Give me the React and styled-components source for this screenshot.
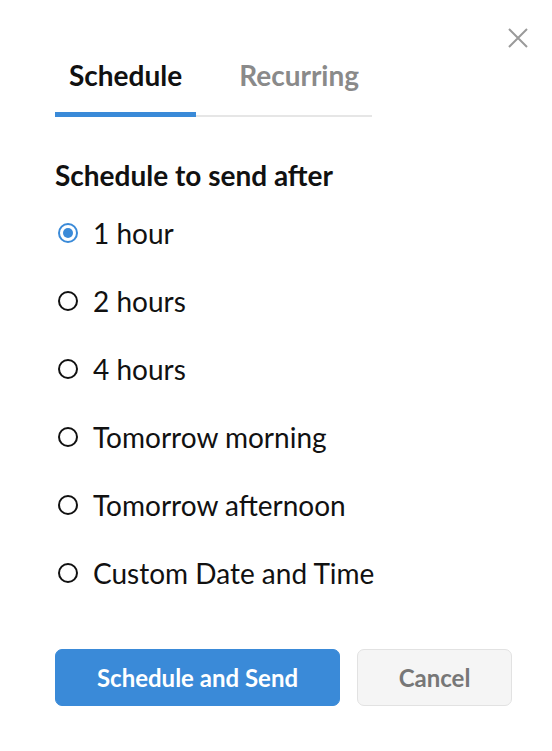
import React, { useState } from "react";
import styled, { createGlobalStyle } from "styled-components";

const Global = createGlobalStyle`
  html, body { margin: 0; padding: 0; background: #ffffff; }
  body { font-family: Lato, "Open Sans", sans-serif; color: #111; }
  * { box-sizing: border-box; }
`;

const Page = styled.div`
  position: relative;
  width: 552px;
  height: 751px;
  padding: 58px 0 0 55px;
`;

const Close = styled.button`
  position: absolute;
  top: 27px;
  right: 23px;
  width: 22px;
  height: 22px;
  padding: 0;
  border: none;
  background: none;
  cursor: pointer;
  display: flex;
  align-items: center;
  justify-content: center;
`;

const Tabs = styled.div`
  display: flex;
  gap: 29px;
  width: 317px;
  border-bottom: 2px solid #e6e6e6;
`;

const Tab = styled.div`
  padding: 0 14px 20px;
  margin-bottom: -2px;
  font-size: 28px;
  line-height: 34px;
  font-weight: 700;
  color: ${(p) => (p.$active ? "#111" : "#8a8a8a")};
  border-bottom: 5px solid ${(p) => (p.$active ? "#3a8ad8" : "transparent")};
  cursor: pointer;
`;

const Heading = styled.div`
  margin-top: 41px;
  font-size: 28px;
  line-height: 34px;
  font-weight: 700;
`;

const Options = styled.div`
  margin-top: 7px;
  display: flex;
  flex-direction: column;
`;

const Option = styled.label`
  display: flex;
  align-items: center;
  height: 68px;
  gap: 15px;
  font-size: 28px;
  line-height: 34px;
  cursor: pointer;
`;

const Radio = styled.span`
  flex: none;
  width: 20px;
  height: 20px;
  margin-left: 3px;
  border-radius: 50%;
  border: 2px solid ${(p) => (p.$checked ? "#3a8ad8" : "#111")};
  display: flex;
  align-items: center;
  justify-content: center;
  &::after {
    content: "";
    width: 10px;
    height: 10px;
    border-radius: 50%;
    background: ${(p) => (p.$checked ? "#3a8ad8" : "transparent")};
  }
`;

const Actions = styled.div`
  margin-top: 42px;
  display: flex;
  gap: 17px;
`;

const Button = styled.button`
  height: 57px;
  width: ${(p) => (p.$primary ? "285px" : "155px")};
  border-radius: 7px;
  font-family: Lato, sans-serif;
  font-size: 24px;
  font-weight: 700;
  cursor: pointer;
  background: ${(p) => (p.$primary ? "#3a8ad8" : "#f5f5f5")};
  color: ${(p) => (p.$primary ? "#fff" : "#777")};
  border: 1px solid ${(p) => (p.$primary ? "#3a8ad8" : "#e2e2e2")};
`;

const options = [
  "1 hour",
  "2 hours",
  "4 hours",
  "Tomorrow morning",
  "Tomorrow afternoon",
  "Custom Date and Time",
];

export default function App() {
  const [tab, setTab] = useState(0);
  const [sel, setSel] = useState(0);
  return (
    <>
      <Global />
      <Page>
        <Close aria-label="Close">
          <svg width="20" height="20" viewBox="0 0 20 20">
            <path d="M1 1L19 19M19 1L1 19" stroke="#9a9a9a" strokeWidth="2" fill="none" />
          </svg>
        </Close>
        <Tabs>
          <Tab $active={tab === 0} onClick={() => setTab(0)}>Schedule</Tab>
          <Tab $active={tab === 1} onClick={() => setTab(1)}>Recurring</Tab>
        </Tabs>
        <Heading>Schedule to send after</Heading>
        <Options>
          {options.map((o, i) => (
            <Option key={o} onClick={() => setSel(i)}>
              <Radio $checked={sel === i} />
              {o}
            </Option>
          ))}
        </Options>
        <Actions>
          <Button $primary>Schedule and Send</Button>
          <Button>Cancel</Button>
        </Actions>
      </Page>
    </>
  );
}
